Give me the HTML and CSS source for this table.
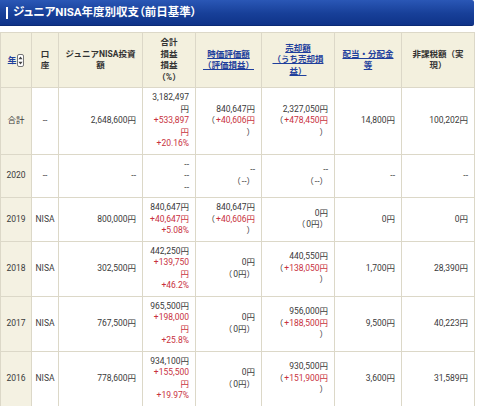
FILE: index.html
```html
<!DOCTYPE html>
<html lang="ja">
<head>
<meta charset="utf-8">
<title>ジュニアNISA年度別収支</title>
<link rel="stylesheet" href="styles.css">
</head>
<body>
<div class="page">
  <h2 class="banner"><span class="bar"></span>ジュニアNISA年度別収支（前日基準）</h2>
  <table class="tbl">
    <colgroup>
      <col class="c-year"><col class="c-acct"><col class="c-inv"><col class="c-pl">
      <col class="c-mv"><col class="c-sell"><col class="c-div"><col class="c-tax">
    </colgroup>
    <thead>
      <tr>
        <th class="yr"><a href="#">年</a><svg class="sort" width="7" height="13" viewBox="0 0 7 13"><rect x="0.5" y="0.5" width="6" height="12" rx="1.5" fill="#fff" stroke="#777"/><path d="M3.5 2.5 L5.6 5.3 H1.4 Z M3.5 10.5 L5.6 7.7 H1.4 Z" fill="#444"/></svg></th>
        <th>口<br>座</th>
        <th>ジュニアNISA投資<br>額</th>
        <th>合計<br>損益<br>損益<br>（%）</th>
        <th><a href="#">時価評価額<br>（評価損益）</a></th>
        <th><a href="#">売却額<br>（うち売却損<br>益）</a></th>
        <th><a href="#">配当・分配金<br>等</a></th>
        <th>非課税額（実<br>現）</th>
      </tr>
    </thead>
    <tbody>
      <tr>
        <td class="yr">合計</td><td class="ctr">--</td><td class="num">2,648,600円</td>
        <td class="num">3,182,497<br>円<br><span class="red">+533,897<br>円<br>+20.16%</span></td>
        <td class="num">840,647円<br><span class="par">（</span><span class="red">+40,606円</span><br>）</td>
        <td class="num">2,327,050円<br><span class="par">（</span><span class="red">+478,450円</span><br>）</td>
        <td class="num">14,800円</td><td class="num">100,202円</td>
      </tr>
      <tr>
        <td class="yr">2020</td><td class="ctr">--</td><td class="num">--</td>
        <td class="num">--<br>--<br>--</td>
        <td class="num">--<br><span class="par">（</span>--）</td>
        <td class="num">--<br><span class="par">（</span>--）</td>
        <td class="num">--</td><td class="num">--</td>
      </tr>
      <tr>
        <td class="yr">2019</td><td class="ctr">NISA</td><td class="num">800,000円</td>
        <td class="num">840,647円<br><span class="red">+40,647円<br>+5.08%</span></td>
        <td class="num">840,647円<br><span class="par">（</span><span class="red">+40,606円</span><br>）</td>
        <td class="num">0円<br><span class="par">（</span>0円）</td>
        <td class="num">0円</td><td class="num">0円</td>
      </tr>
      <tr>
        <td class="yr">2018</td><td class="ctr">NISA</td><td class="num">302,500円</td>
        <td class="num">442,250円<br><span class="red">+139,750<br>円<br>+46.2%</span></td>
        <td class="num">0円<br><span class="par">（</span>0円）</td>
        <td class="num">440,550円<br><span class="par">（</span><span class="red">+138,050円</span><br>）</td>
        <td class="num">1,700円</td><td class="num">28,390円</td>
      </tr>
      <tr>
        <td class="yr">2017</td><td class="ctr">NISA</td><td class="num">767,500円</td>
        <td class="num">965,500円<br><span class="red">+198,000<br>円<br>+25.8%</span></td>
        <td class="num">0円<br><span class="par">（</span>0円）</td>
        <td class="num">956,000円<br><span class="par">（</span><span class="red">+188,500円</span><br>）</td>
        <td class="num">9,500円</td><td class="num">40,223円</td>
      </tr>
      <tr>
        <td class="yr">2016</td><td class="ctr">NISA</td><td class="num">778,600円</td>
        <td class="num">934,100円<br><span class="red">+155,500<br>円<br>+19.97%</span></td>
        <td class="num">0円<br><span class="par">（</span>0円）</td>
        <td class="num">930,500円<br><span class="par">（</span><span class="red">+151,900円</span><br>）</td>
        <td class="num">3,600円</td><td class="num">31,589円</td>
      </tr>
    </tbody>
  </table>
</div>
</body>
</html>
```

FILE: styles.css
```css
html, body {
  margin: 0;
  padding: 0;
  background: #fff;
}
body {
  font-family: Roboto, "Noto Sans CJK JP", sans-serif;
  color: #3a3a3a;
}
.page {
  width: 474px;
}
.banner {
  margin: 0 0 6px 0;
  height: 26px;
  box-sizing: border-box;
  display: flex;
  align-items: center;
  gap: 5px;
  padding-left: 6px;
  background: linear-gradient(#2a57b6, #173f98 55%, #0f3389);
  border-bottom: 1px solid #0b2a75;
  border-radius: 0 2px 2px 0;
  color: #fff;
  font-size: 11.5px;
  font-weight: bold;
  font-feature-settings: "palt";
  line-height: 1;
}
.bar {
  display: block;
  width: 2px;
  height: 12px;
  background: #fff;
}
.tbl {
  width: 474px;
  table-layout: fixed;
  border-collapse: collapse;
  font-size: 8.5px;
  line-height: 11.5px;
}
.c-year { width: 31px; }
.c-acct { width: 27px; }
.c-inv { width: 84px; }
.c-pl { width: 53px; }
.c-mv { width: 66px; }
.c-sell { width: 73px; }
.c-div { width: 67px; }
.c-tax { width: 73px; }
.tbl th, .tbl td {
  border: 1px solid #dcd8c8;
  padding: 4px 2px;
  vertical-align: middle;
  white-space: nowrap;
}
.tbl th {
  background: #f3f0de;
  font-weight: bold;
  text-align: center;
  color: #333;
}
.tbl th a {
  color: #1f3f9c;
  text-decoration: underline;
}
.tbl td.yr {
  background: #f4f1e2;
  text-align: center;
}
.tbl td.ctr {
  text-align: center;
}
.tbl td.num {
  text-align: right;
  padding-right: 6px;
}
.par {
  margin-right: 1px;
}
.sort {
  vertical-align: middle;
  margin-left: 1px;
}
.red {
  color: #c8323e;
}
```
